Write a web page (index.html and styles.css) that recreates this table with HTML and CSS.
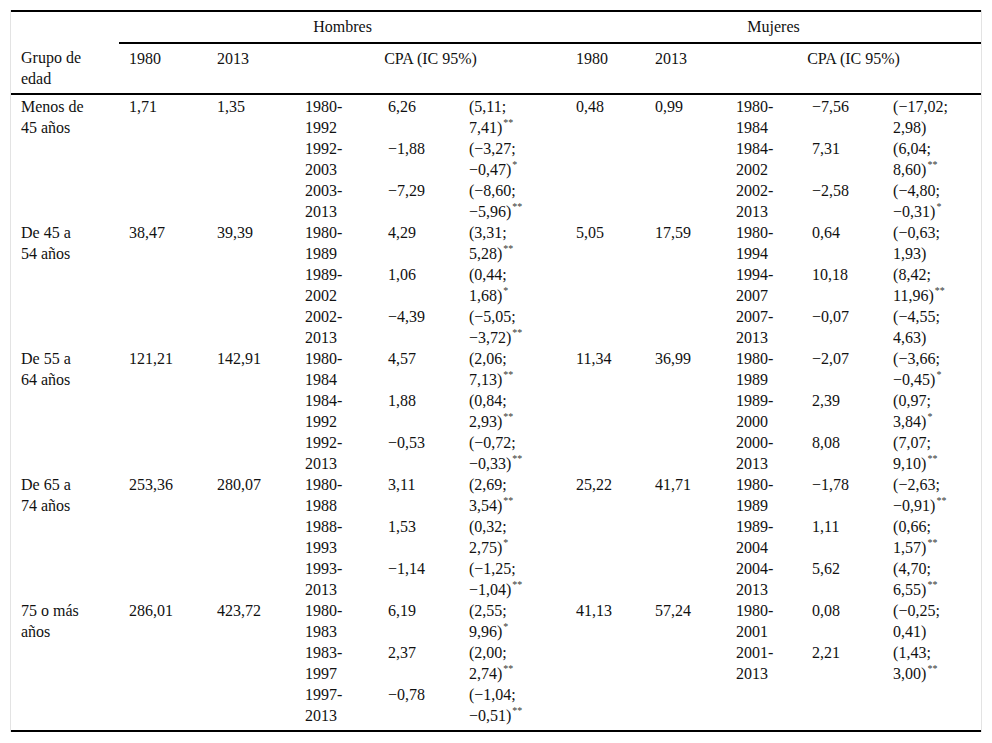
FILE: index.html
```html
<!DOCTYPE html>
<html lang="es">
<head>
<meta charset="utf-8">
<title>Tabla</title>
<link rel="stylesheet" href="styles.css">
</head>
<body>
<div class="frame">
<table class="data">
<colgroup>
<col class="c1"><col class="c2"><col class="c3"><col class="c4"><col class="c5"><col class="c6">
<col class="c7"><col class="c8"><col class="c9"><col class="c10"><col class="c11">
</colgroup>
<thead>
<tr class="h1">
<th class="blank"></th>
<th colspan="5" class="grp">Hombres</th>
<th colspan="5" class="grp">Mujeres</th>
</tr>
<tr class="h2">
<th>Grupo de<br>edad</th>
<th>1980</th>
<th>2013</th>
<th colspan="3" class="ctr">CPA (IC 95%)</th>
<th>1980</th>
<th>2013</th>
<th colspan="3" class="ctr">CPA (IC 95%)</th>
</tr>
</thead>
<tbody>
<tr class="first">
<td rowspan="3">Menos de<br>45 años</td><td rowspan="3">1,71</td><td rowspan="3">1,35</td>
<td>1980-<br>1992</td><td>6,26</td><td>(5,11;<br>7,41)<sup>**</sup></td>
<td rowspan="3">0,48</td><td rowspan="3">0,99</td>
<td>1980-<br>1984</td><td>−7,56</td><td>(−17,02;<br>2,98)</td>
</tr>
<tr>
<td>1992-<br>2003</td><td>−1,88</td><td>(−3,27;<br>−0,47)<sup>*</sup></td>
<td>1984-<br>2002</td><td>7,31</td><td>(6,04;<br>8,60)<sup>**</sup></td>
</tr>
<tr>
<td>2003-<br>2013</td><td>−7,29</td><td>(−8,60;<br>−5,96)<sup>**</sup></td>
<td>2002-<br>2013</td><td>−2,58</td><td>(−4,80;<br>−0,31)<sup>*</sup></td>
</tr>

<tr>
<td rowspan="3">De 45 a<br>54 años</td><td rowspan="3">38,47</td><td rowspan="3">39,39</td>
<td>1980-<br>1989</td><td>4,29</td><td>(3,31;<br>5,28)<sup>**</sup></td>
<td rowspan="3">5,05</td><td rowspan="3">17,59</td>
<td>1980-<br>1994</td><td>0,64</td><td>(−0,63;<br>1,93)</td>
</tr>
<tr>
<td>1989-<br>2002</td><td>1,06</td><td>(0,44;<br>1,68)<sup>*</sup></td>
<td>1994-<br>2007</td><td>10,18</td><td>(8,42;<br>11,96)<sup>**</sup></td>
</tr>
<tr>
<td>2002-<br>2013</td><td>−4,39</td><td>(−5,05;<br>−3,72)<sup>**</sup></td>
<td>2007-<br>2013</td><td>−0,07</td><td>(−4,55;<br>4,63)</td>
</tr>

<tr>
<td rowspan="3">De 55 a<br>64 años</td><td rowspan="3">121,21</td><td rowspan="3">142,91</td>
<td>1980-<br>1984</td><td>4,57</td><td>(2,06;<br>7,13)<sup>**</sup></td>
<td rowspan="3">11,34</td><td rowspan="3">36,99</td>
<td>1980-<br>1989</td><td>−2,07</td><td>(−3,66;<br>−0,45)<sup>*</sup></td>
</tr>
<tr>
<td>1984-<br>1992</td><td>1,88</td><td>(0,84;<br>2,93)<sup>**</sup></td>
<td>1989-<br>2000</td><td>2,39</td><td>(0,97;<br>3,84)<sup>*</sup></td>
</tr>
<tr>
<td>1992-<br>2013</td><td>−0,53</td><td>(−0,72;<br>−0,33)<sup>**</sup></td>
<td>2000-<br>2013</td><td>8,08</td><td>(7,07;<br>9,10)<sup>**</sup></td>
</tr>

<tr>
<td rowspan="3">De 65 a<br>74 años</td><td rowspan="3">253,36</td><td rowspan="3">280,07</td>
<td>1980-<br>1988</td><td>3,11</td><td>(2,69;<br>3,54)<sup>**</sup></td>
<td rowspan="3">25,22</td><td rowspan="3">41,71</td>
<td>1980-<br>1989</td><td>−1,78</td><td>(−2,63;<br>−0,91)<sup>**</sup></td>
</tr>
<tr>
<td>1988-<br>1993</td><td>1,53</td><td>(0,32;<br>2,75)<sup>*</sup></td>
<td>1989-<br>2004</td><td>1,11</td><td>(0,66;<br>1,57)<sup>**</sup></td>
</tr>
<tr>
<td>1993-<br>2013</td><td>−1,14</td><td>(−1,25;<br>−1,04)<sup>**</sup></td>
<td>2004-<br>2013</td><td>5,62</td><td>(4,70;<br>6,55)<sup>**</sup></td>
</tr>

<tr>
<td rowspan="3">75 o más<br>años</td><td rowspan="3">286,01</td><td rowspan="3">423,72</td>
<td>1980-<br>1983</td><td>6,19</td><td>(2,55;<br>9,96)<sup>*</sup></td>
<td rowspan="3">41,13</td><td rowspan="3">57,24</td>
<td>1980-<br>2001</td><td>0,08</td><td>(−0,25;<br>0,41)</td>
</tr>
<tr>
<td>1983-<br>1997</td><td>2,37</td><td>(2,00;<br>2,74)<sup>**</sup></td>
<td>2001-<br>2013</td><td>2,21</td><td>(1,43;<br>3,00)<sup>**</sup></td>
</tr>
<tr class="last">
<td>1997-<br>2013</td><td>−0,78</td><td>(−1,04;<br>−0,51)<sup>**</sup></td>
<td></td><td></td><td></td>
</tr>
</tbody>
</table>
</div>
</body>
</html>
```

FILE: styles.css
```css
html, body {
  margin: 0;
  padding: 0;
  background: #fff;
}

body {
  padding: 10px 0 0 10px;
  font-family: "Liberation Serif", "Times New Roman", serif;
  font-size: 16px;
  color: #111;
}

.frame {
  width: 970px;
  border-left: 1px solid #e3e3e3;
  border-right: 1px solid #e3e3e3;
}

.data {
  width: 970px;
  table-layout: fixed;
  border-collapse: collapse;
  border-top: 2px solid #000;
  border-bottom: 2px solid #000;
}

.c1 { width: 108px; }
.c2 { width: 88px; }
.c3 { width: 88px; }
.c4 { width: 83px; }
.c5 { width: 81px; }
.c6 { width: 107px; }
.c7 { width: 79px; }
.c8 { width: 81px; }
.c9 { width: 76px; }
.c10 { width: 81px; }
.c11 { width: 98px; }

.data th,
.data td {
  padding: 0 0 0 10px;
  line-height: 21px;
  text-align: left;
  vertical-align: top;
  font-weight: normal;
  white-space: nowrap;
}

.data .h1 th {
  padding-top: 4px;
  padding-bottom: 5px;
}

.data .h1 .grp {
  text-align: center;
  padding-left: 0;
  border-bottom: 2px solid #000;
}

.data .h2 th {
  padding-top: 4px;
  padding-bottom: 4px;
  border-bottom: 2px solid #000;
}

.data .h2 .ctr {
  text-align: center;
  padding-left: 0;
}

.data tbody .first td {
  padding-top: 1px;
}

.data tbody .last td {
  padding-bottom: 4px;
}

.data sup {
  font-size: 10px;
  line-height: 0;
  vertical-align: 7px;
  margin-left: 1px;
  color: #333;
}
```
